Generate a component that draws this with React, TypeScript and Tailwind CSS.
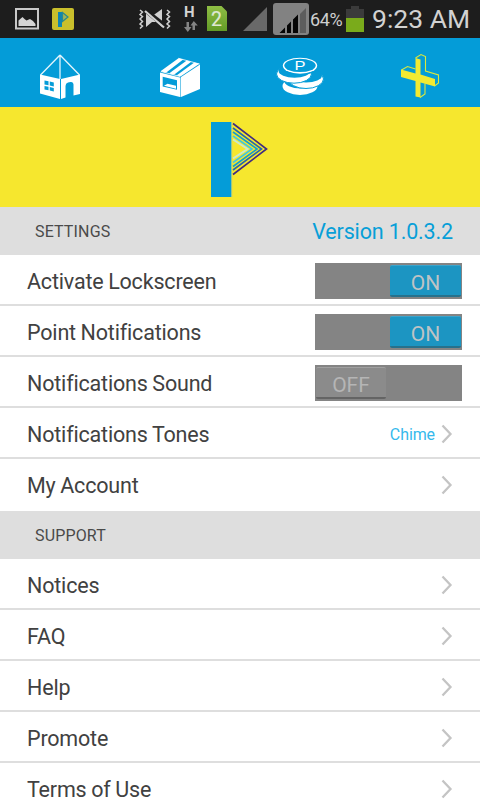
import React from "react";

const PictureIcon = () => (
  <svg className="w-6 h-[22px]" viewBox="0 0 24 22">
    <rect x="1" y="1" width="22" height="19.5" fill="#1d1d1d" stroke="#c9c9c9" strokeWidth="2" />
    <path d="M3.5 18V12.500l4-3.500 2 2 2 1.500 3.500-1.500 3 2 2.500 3v2z" fill="#d4d4d4" />
  </svg>
);

const AppBadge = () => (
  <svg className="w-[22px] h-[22px]" viewBox="0 0 22 22">
    <rect width="22" height="22" rx="2" fill="#c9bf2c" />
    <rect x="6" y="4" width="4" height="15" fill="#0f84b0" />
    <path d="M10.5 4.5L16 9l-5.5 4.5z" fill="#9fb35a" stroke="#2a8a8c" strokeWidth="1.2" />
  </svg>
);

const MutedIcon = () => (
  <svg className="w-8 h-[22px]" viewBox="0 0 32 22" fill="none" stroke="#d0d0d0">
    <path d="M1 1l2.500 2L1 5.500l2.500 2L1 10l2.500 2.500L1 15l2.500 2L1 19.500" strokeWidth="1.500" />
    <path d="M28 1l2.500 2L28 5.500l2.500 2L28 10l2.500 2.500L28 15l2.500 2L28 19.500" strokeWidth="1.500" />
    <path d="M23 0v18L14 9.500V6.500z" fill="#d0d0d0" stroke="none" />
    <path d="M7 4v14l6-5h4z" fill="#d0d0d0" stroke="none" />
    <path d="M6 1L25.500 16.500" stroke="#1d1d1d" strokeWidth="4.500" />
    <path d="M6 2L25 18.500" strokeWidth="2.200" />
  </svg>
);

const DataArrows = () => (
  <svg className="w-[14px] h-[11px]" viewBox="0 0 14 11" fill="#858585">
    <path d="M2.500 1h2.500v5h2.500L3.800 11 0 6h2.500z" />
    <path d="M8.500 9H11V4.500h2.800L9.800 0 6.500 4.500h2z" />
  </svg>
);

const SimCard = () => (
  <svg className="w-5 h-[25px]" viewBox="0 0 20 25">
    <defs>
      <linearGradient id="sim" x2="0" y2="1">
        <stop stopColor="#8fbe45" />
        <stop offset="1" stopColor="#639b27" />
      </linearGradient>
    </defs>
    <path d="M0 0h14.500L20 5.500V25H0z" fill="url(#sim)" />
    <text x="9.500" y="20" textAnchor="middle" fontFamily="Roboto, sans-serif" fontSize="19.500" fill="#dfe8d2" stroke="#dfe8d2" strokeWidth=".2">
      2
    </text>
  </svg>
);

const SignalBox = () => (
  <svg className="w-9 h-8" viewBox="0 0 36 32">
    <rect width="36" height="32" rx="3" fill="#828282" />
    <path d="M33 5v25H27V11z" fill="#5d5d5d" />
    <path d="M6.500 30l5.500-5.500V30zM14 30v-7.500l4-4V30zM20 30V16.500l5-5V30z" fill="#050505" />
  </svg>
);

const Battery = () => (
  <svg className="w-[18px] h-[26px]" viewBox="0 0 18 26">
    <path d="M5 0h8v3h5v9H0V3h5z" fill="#3b3b3b" />
    <path d="M0 12h18v14H0z" fill="#7aab1b" />
  </svg>
);

const StatusBar = () => (
  <div className="flex h-[38px] bg-[#1d1d1d] pl-[15px] overflow-hidden">
    <div className="mt-2"><PictureIcon /></div>
    <div className="mt-2 ml-[13px]"><AppBadge /></div>
    <div className="mt-[9px] ml-[65px]"><MutedIcon /></div>
    <div className="mt-[5px] ml-[13px] w-[14px]">
      <div className="h-4 text-[15px] leading-[15px] font-bold text-[#d4d4d4]">H</div>
      <DataArrows />
    </div>
    <div className="mt-[6px] ml-[9px]"><SimCard /></div>
    <svg className="w-6 h-6 mt-[7px] ml-4" viewBox="0 0 24 24">
      <path d="M24 0v24H0z" fill="#696969" />
    </svg>
    <div className="mt-[3px] ml-[6px]"><SignalBox /></div>
    <div className="ml-[1px] mt-[10px] w-9 text-[18px] leading-5 tracking-[-0.4px] text-[#cfcfcf]">64%</div>
    <div className="mt-[6px]"><Battery /></div>
    <div className="ml-[8px] mt-1 text-[26.5px] leading-[30px] whitespace-nowrap text-[#d2d2d2]">9:23 AM</div>
  </div>
);

const HomeIcon = () => (
  <svg className="w-[60px] h-[60px]" viewBox="0 0 60 60">
    <path d="M10 29.500L30 34V54L10 48.500z" fill="#fff" />
    <path d="M31 34L50 29.500V49L43.500 50.500V39.500q0-3-3-2.500l-2.500.6q-2.500.6-2.500 3.400v11.500L31 54z" fill="#fff" />
    <path d="M30 10L10.500 30M30 10l19.500 20M30 10v24" fill="none" stroke="#e4f5fc" strokeWidth="1.300" />
    <path d="M14.500 35.500l4 .8v4l-4-.8zM19.800 36.600l4 .8v4l-4-.8zM14.500 41l4 .8v3.500l-4-.8zM19.800 42.100l4 .8v3.500l-4-.8z" fill="#049cd8" />
  </svg>
);

const BoxIcon = () => (
  <svg className="w-[60px] h-[60px]" viewBox="0 0 60 60">
    <g fill="#fff">
      <path d="M10 27.500l20 5V52l-20-5z" />
      <path d="M31 32l19-12.500V44L31 52z" />
      <path d="M10.500 26.300L28.500 13.200l4.700 1.200L16 27.700z" />
      <path d="M19 28.500L36.700 15.500l4.500 1.200L24 29.700z" />
      <path d="M26.500 30.400L44.300 17.500l5.200 1.300L30.500 31.400z" />
    </g>
    <path d="M11 26.500l19 5M28.500 13.300L49.500 19" stroke="#fff" strokeWidth=".8" />
    <path d="M30.500 32.500V52" stroke="#8ed3ef" strokeWidth=".8" />
    <path d="M12.700 31.700l14.300 3.500v9.600l-14.300-3.300z" fill="#049cd8" />
    <path d="M14 40.700l3.500-2 8.500 2v3z" fill="#fff" />
  </svg>
);

const CoinsIcon = () => (
  <svg className="w-[60px] h-[60px]" viewBox="0 0 60 60">
    <ellipse cx="30" cy="41" rx="17.500" ry="9" fill="#fff" />
    <ellipse cx="31" cy="35.500" rx="17" ry="8" fill="#049cd8" />
    <ellipse cx="36" cy="34" rx="17.500" ry="9.500" fill="#fff" stroke="#049cd8" />
    <ellipse cx="36" cy="30.500" rx="16" ry="7" fill="#049cd8" />
    <ellipse cx="24" cy="29" rx="17.500" ry="9.200" fill="#fff" stroke="#049cd8" />
    <ellipse cx="24.500" cy="25.700" rx="16" ry="7" fill="#049cd8" />
    <ellipse cx="30" cy="20.700" rx="18.700" ry="9.300" fill="#049cd8" />
    <ellipse cx="30" cy="20.700" rx="17.200" ry="8" fill="#fff" />
    <ellipse cx="30" cy="20.400" rx="15.700" ry="6.700" fill="#049cd8" />
    <text x="30" y="25" textAnchor="middle" textLength="11" lengthAdjust="spacingAndGlyphs" fontFamily="Liberation Sans, sans-serif" fontSize="13" fill="#fff">
      P
    </text>
  </svg>
);

const PlusIcon = () => (
  <svg className="w-[60px] h-[60px]" viewBox="0 0 60 60">
    <g fill="none" stroke="#d9e83f" strokeWidth="1.100">
      <path d="M25.500 13L31 9.500l4.500 2v14.500l13 4v8l-4 3" />
      <path d="M11.500 25l6-3.500 8 2.500M30 52.500l5-3.500V38.500" />
    </g>
    <path d="M25.500 13l5 1.500v15l14.500 4.500v7.500L30.500 37.500v15l-5-1V36L11 32v-7.500l14.500 4z" fill="#f2ea32" />
  </svg>
);

const Logo = () => (
  <svg className="w-[80px] h-[100px]" viewBox="0 0 80 100">
    <rect x="11" y="15" width="20.500" height="75" fill="#049cd8" />
    <path d="M31.700 15v75" stroke="#a9c98a" strokeWidth=".8" />
    <g fill="none" strokeWidth="1.700">
      <path d="M33 16.500L66.500 42 33 67.500" stroke="#3f2c82" />
      <path d="M33 21L61.500 42 33 63" stroke="#2669aa" />
      <path d="M33 25L57 42 33 59.500" stroke="#159ecb" />
      <path d="M33 29L52 42 33 55.500" stroke="#45c5dd" />
      <path d="M33 32.500L47.500 42 33 51.500" stroke="#cbe9cd" strokeWidth="2" />
    </g>
  </svg>
);

const Chevron = () => (
  <svg className="w-3 h-5 shrink-0" viewBox="0 0 12 20" fill="none">
    <path d="M1.500 1.500L9.500 10l-8 8.500" stroke="#c4c4c4" strokeWidth="2.300" />
  </svg>
);

const Toggle: React.FC<{ on: boolean }> = ({ on }) => (
  <div className={`flex w-[147px] h-9 bg-[#848484] pt-[2px] px-px ${on ? "justify-end" : ""}`}>
    <div
      className={`flex h-8 items-center justify-center rounded-[2px] border-t border-b-2 pt-[6px] text-[21px] ${
        on
          ? "w-[71px] bg-[#1c95c2] border-t-[#3ba4cc] border-b-[#27718c] text-[#bfc3c5]"
          : "w-[70px] bg-[#8b8b8b] border-t-[#a0a0a0] border-b-[#646464] text-[#b5b5b5]"
      }`}
    >
      {on ? "ON" : "OFF"}
    </div>
  </div>
);

const SectionHeader: React.FC<{ title: string; extra?: string }> = ({ title, extra }) => (
  <div className="flex h-12 items-center justify-between bg-[#dedede] pl-[35px] pr-[27px]">
    <span className="pt-[2px] text-[16px] tracking-[0.15px] text-[#4a4a4a]">{title}</span>
    {extra && <span className="pt-[3px] text-[21.5px] tracking-[-0.15px] text-[#079fd8]">{extra}</span>}
  </div>
);

type Item = { label: string; toggle?: boolean; value?: string };

const settings: Item[] = [
  { label: "Activate Lockscreen", toggle: true },
  { label: "Point Notifications", toggle: true },
  { label: "Notifications Sound", toggle: false },
  { label: "Notifications Tones", value: "Chime" },
  { label: "My Account" },
];

const support: Item[] = [
  { label: "Notices" },
  { label: "FAQ" },
  { label: "Help" },
  { label: "Promote" },
  { label: "Terms of Use" },
];

const Row: React.FC<{ item: Item }> = ({ item }) => (
  <div className="flex h-[51px] items-center justify-between border-b-2 border-[#dedede] pl-[27px] pt-[3px] last:h-[52px] last:border-b-0 last:pb-[3px]">
    <span className="pt-[2px] text-[21.5px] leading-5 tracking-[-0.18px] [word-spacing:-0.5px] text-[#414141]">
      {item.label}
    </span>
    {item.toggle !== undefined ? (
      <div className="pr-[18px]"><Toggle on={item.toggle} /></div>
    ) : (
      <div className="flex items-center gap-[6px] pr-[27px]">
        {item.value && <span className="pt-px text-[16px] tracking-[-0.1px] text-[#35b9ec]">{item.value}</span>}
        <Chevron />
      </div>
    )}
  </div>
);

const App: React.FC = () => {
  const tabs = [HomeIcon, BoxIcon, CoinsIcon, PlusIcon];

  return (
    <div className="w-[480px] h-[800px] overflow-hidden bg-white font-[Roboto,sans-serif]">
      <StatusBar />
      <nav className="grid grid-cols-4 h-[69px] justify-items-center bg-[#049cd8] pt-[7px]">
        {tabs.map((Icon, index) => (
          <Icon key={index} />
        ))}
      </nav>
      <div className="flex h-[100px] justify-center bg-[#f6e72e]">
        <Logo />
      </div>
      <SectionHeader title="SETTINGS" extra="Version 1.0.3.2" />
      <div>
        {settings.map((item) => (
          <Row key={item.label} item={item} />
        ))}
      </div>
      <SectionHeader title="SUPPORT" />
      <div>
        {support.map((item) => (
          <Row key={item.label} item={item} />
        ))}
      </div>
    </div>
  );
};

export default App;
